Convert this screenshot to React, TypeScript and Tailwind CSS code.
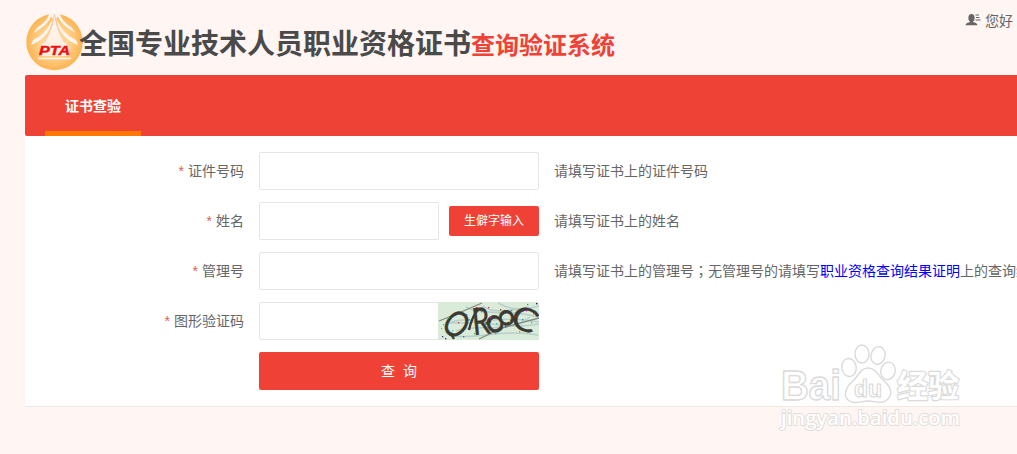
import React from 'react';

const CJK = "font-['Liberation_Sans','Noto_Sans_CJK_SC',sans-serif]";

const Logo: React.FC = () => (
  <svg width="58" height="60" viewBox="0 0 58 60" className="shrink-0">
    <defs>
      <radialGradient id="disc" cx="50%" cy="50%" r="50%">
        <stop offset="0.5" stopColor="#ffd591" />
        <stop offset="1" stopColor="#fdb352" />
      </radialGradient>
      <linearGradient id="road" x1="0" y1="0" x2="0" y2="1">
        <stop offset="0" stopColor="#fff5f2" />
        <stop offset="1" stopColor="#ffeeda" />
      </linearGradient>
    </defs>
    <circle cx="29.500" cy="31" r="28.200" fill="url(#disc)" />
    <path d="M24 0 H35 V3.500 L29.500 9 L24 4Z" fill="#fff5f2" />
    <g fill="#fff5f2">
      <path d="M27 3 C24 12 18 16 9 22 C11 17 14 15 16 14 C20 11 23 7 24 3Z" />
      <path d="M32 3 C35 12 41 16 50 22 C48 17 45 15 43 14 C39 11 36 7 35 3Z" />
      <path d="M28 6 C26 21 18 29 6 34 L8 29 C17 25 24 18 28 6Z" />
      <path d="M31 6 C33 21 41 29 53 34 L51 29 C42 25 35 18 31 6Z" />
    </g>
    <path d="M29.500 2 C28 17 23 27 15 36 V45 H44 V36 C36 27 31 17 29.500 2Z" fill="url(#road)" />
    <path d="M29.500 3 C27 17 24 24 19 32 M29.500 3 C32 17 35 24 40 32" fill="none" stroke="#fac0a0" strokeWidth="0.8" />
    <path d="M13 47.500 H46" stroke="#fff5f2" strokeWidth="1.500" />
    <text
      x="14"
      y="44"
      textLength="31"
      lengthAdjust="spacingAndGlyphs"
      className="font-['Liberation_Sans',sans-serif] text-[12px] font-bold italic"
      fill="#f20d12"
      stroke="#f20d12"
      strokeWidth="0.4"
    >
      PTA
    </text>
  </svg>
);

const UserIcon: React.FC = () => (
  <svg width="16" height="12" viewBox="0 0 16 12" fill="#666">
    <ellipse cx="6.500" cy="4" rx="3.100" ry="3.900" />
    <path d="M5 7 H8 V8 C10 8.600 12.300 9 12.500 11.300 H0.500 C0.700 9 3 8.600 5 8Z" />
    <path d="M10.500 0.500 H14 V1.500 H10.500Z M11 3 H14.500 V4 H11Z M10.500 5.500 H15.500 V6.500 H10.500Z" />
  </svg>
);

const specks = [
  [4, 34, '#33a'], [7, 36, '#22c'], [3, 26, '#7d3'], [5, 22, '#4c3'], [10, 15, '#5c4'], [28, 12, '#26b'],
  [31, 17, '#3b6'], [38, 5, '#d22'], [43, 9, '#2b2'], [50, 5, '#c33'], [52, 15, '#b3b'], [58, 21, '#2bb'],
  [62, 7, '#b42'], [67, 24, '#33c'], [73, 8, '#2a2'], [78, 14, '#c22'], [84, 17, '#38c'], [89, 2, '#2b4'],
  [95, 11, '#c3a'], [98, 1, '#115'], [93, 20, '#3bb'], [81, 29, '#c82'], [57, 31, '#2ad'], [36, 31, '#3b3'],
  [20, 20, '#d33'], [14, 28, '#4bc'], [25, 34, '#36c'], [71, 19, '#8d2'], [88, 8, '#b2c'], [47, 21, '#4c2'],
] as const;

const Captcha: React.FC = () => (
  <svg width="101" height="38" viewBox="0 0 101 38" className="shrink-0 bg-[#daecd9]">
    <g fill="none" stroke="#b7cfcb" strokeWidth="1.500">
      <path d="M10 22 C30 10 55 30 101 22" />
      <path d="M8 20 C35 25 60 12 101 20" />
      <path d="M12 34 C40 37 65 27 100 33" />
      <path d="M18 29 C40 20 65 34 92 15" />
      <path d="M45 4 C60 15 80 2 99 10" />
      <path d="M60 1 C72 8 84 8 101 4" />
      <path d="M28 5 C45 15 70 6 100 15" />
    </g>
    <path d="M1 19 L16 13 L44 1 M41 37 L64 26 L101 16" fill="none" stroke="#7e8983" strokeWidth="1.300" />
    <g
      fill="#3a3932"
      stroke="#3a3932"
      strokeWidth="0.3"
      textAnchor="middle"
      className="font-['Lato','Liberation_Sans',sans-serif] text-[30px]"
    >
      <text transform="translate(18.500 22) rotate(38) scale(0.95 1.220)" y="10.800">O</text>
      <text transform="translate(43 19) rotate(-6) scale(0.95 1.250)" y="10.800">R</text>
      <text transform="translate(62.500 19) rotate(62) scale(1.200 1.280)" y="10.800">8</text>
      <text transform="translate(87 17) rotate(24) scale(1.300 1.080)" y="10.800">C</text>
    </g>
    {/* pen strokes that join the characters */}
    <path d="M13 32 L16 37 M31 28 C33 19 36 12 40 8 M47 22 L53 19" fill="none" stroke="#3a3932" strokeWidth="2.400" />
    {specks.map(([x, y, color]) => (
      <rect key={`${x}-${y}`} x={x} y={y} width="1.300" height="1.300" fill={color} />
    ))}
  </svg>
);

const Watermark: React.FC = () => (
  <svg
    width="190"
    height="100"
    viewBox="0 0 190 100"
    className="pointer-events-none absolute left-[776px] top-[339px]"
    fill="#fff"
    stroke="#dadada"
    strokeWidth="1.400"
    strokeLinejoin="round"
  >
    <text
      x="5"
      y="61"
      textLength="60"
      lengthAdjust="spacingAndGlyphs"
      className="font-['Liberation_Sans',sans-serif] text-[42px] font-bold"
    >
      Bai
    </text>
    <ellipse cx="73" cy="28.500" rx="7.200" ry="9" transform="rotate(-10 73 28.500)" />
    <ellipse cx="86" cy="15" rx="7" ry="9" />
    <ellipse cx="102" cy="16.500" rx="7" ry="9" transform="rotate(14 102 16.500)" />
    <ellipse cx="112" cy="32" rx="7.200" ry="8.800" transform="rotate(12 112 32)" />
    <path d="M92 29 C100 29 103 38 109 43 C115 48 117 55 112 60 C106 66 99 62 92 62 C84 62 78 66 72 61 C67 56 70 48 76 43 C82 38 84 29 92 29Z" />
    <text
      x="78"
      y="58"
      textLength="28"
      lengthAdjust="spacingAndGlyphs"
      strokeWidth="1.200"
      className="font-['Liberation_Sans',sans-serif] text-[24px] font-bold"
    >
      du
    </text>
    <text
      x="121"
      y="58"
      strokeWidth="2.400"
      paintOrder="stroke"
      className="font-['Noto_Sans_CJK_SC',sans-serif] text-[31px] font-bold"
    >
      经验
    </text>
    <text
      x="5"
      y="86"
      textLength="179"
      lengthAdjust="spacingAndGlyphs"
      stroke="#e2dbd9"
      strokeWidth="1.800"
      paintOrder="stroke"
      className="font-['Open_Sans',sans-serif] text-[20px] font-semibold"
    >
      jingyan.baidu.com
    </text>
  </svg>
);

interface FieldProps {
  label: string;
  hint?: React.ReactNode;
  children: React.ReactNode;
}

const Field: React.FC<FieldProps> = ({ label, hint, children }) => (
  <div className="flex h-[38px] items-center">
    <label className="w-[219px] shrink-0 text-right">
      <span className="mr-1 text-[#e0605a]">*</span>
      {label}
    </label>
    <div className="ml-[15px] flex w-[280px] shrink-0 items-center">{children}</div>
    <div className="ml-[15px] whitespace-nowrap">{hint}</div>
  </div>
);

const inputClass = 'h-[38px] min-w-0 rounded-[2px] border border-[#e6e6e6] bg-white px-2.5 outline-none';

const App: React.FC = () => {
  return (
    <div className={`relative h-[454px] w-full overflow-hidden bg-[#fff5f2] pl-[25px] text-[14px] leading-[20px] text-[#666] ${CJK}`}>
      <header className="flex h-[75px] justify-between">
        <div className="flex items-start pt-[11px]">
          <Logo />
          <h1 className="-ml-[4px] flex items-baseline whitespace-nowrap pt-[14px] leading-[40px]">
            <span className="text-[28px] font-bold text-[#4a4a4a]">全国专业技术人员职业资格证书</span>
            <span className="text-[24px] font-bold text-[#ef4136]">查询验证系统</span>
          </h1>
        </div>
        <div className="mt-[10px] flex h-5 items-center gap-1 pr-1">
          <UserIcon />
          <span className="pt-0.5">您好</span>
        </div>
      </header>

      <nav className="flex h-[61px] rounded-l-[2px] bg-[#ee4236] pl-5">
        <a className="flex h-full w-24 items-center justify-center border-b-[5px] border-[#ff7800] pt-[5px] font-bold text-white">
          证书查验
        </a>
      </nav>

      <main className="flex h-[271px] flex-col gap-3 border-b border-[#f0e8e5] bg-white pt-4">
        <Field label="证件号码" hint="请填写证书上的证件号码">
          <input className={`${inputClass} w-full`} />
        </Field>
        <Field label="姓名" hint="请填写证书上的姓名">
          <input className={`${inputClass} w-[180px]`} />
          <button className="ml-2.5 h-[30px] w-[90px] rounded-[2px] bg-[#ef4136] text-[12px] text-white">
            生僻字输入
          </button>
        </Field>
        <Field
          label="管理号"
          hint={
            <>
              请填写证书上的管理号
              <span className="font-['Noto_Sans_CJK_TC',sans-serif] leading-none">；</span>
              无管理号的请填写
              <a className="text-[#0000ff]">职业资格查询结果证明</a>
              上的查询编号
            </>
          }
        >
          <input className={`${inputClass} w-full`} />
        </Field>
        <Field label="图形验证码">
          <input className={`${inputClass} w-[180px]`} />
          <div className="-ml-px">
            <Captcha />
          </div>
        </Field>
        <button className="ml-[234px] h-[38px] w-[280px] shrink-0 rounded-[2px] bg-[#ef4136] text-white">
          <span className="whitespace-pre">查&nbsp; 询</span>
        </button>
      </main>

      <Watermark />
    </div>
  );
};

export default App;
